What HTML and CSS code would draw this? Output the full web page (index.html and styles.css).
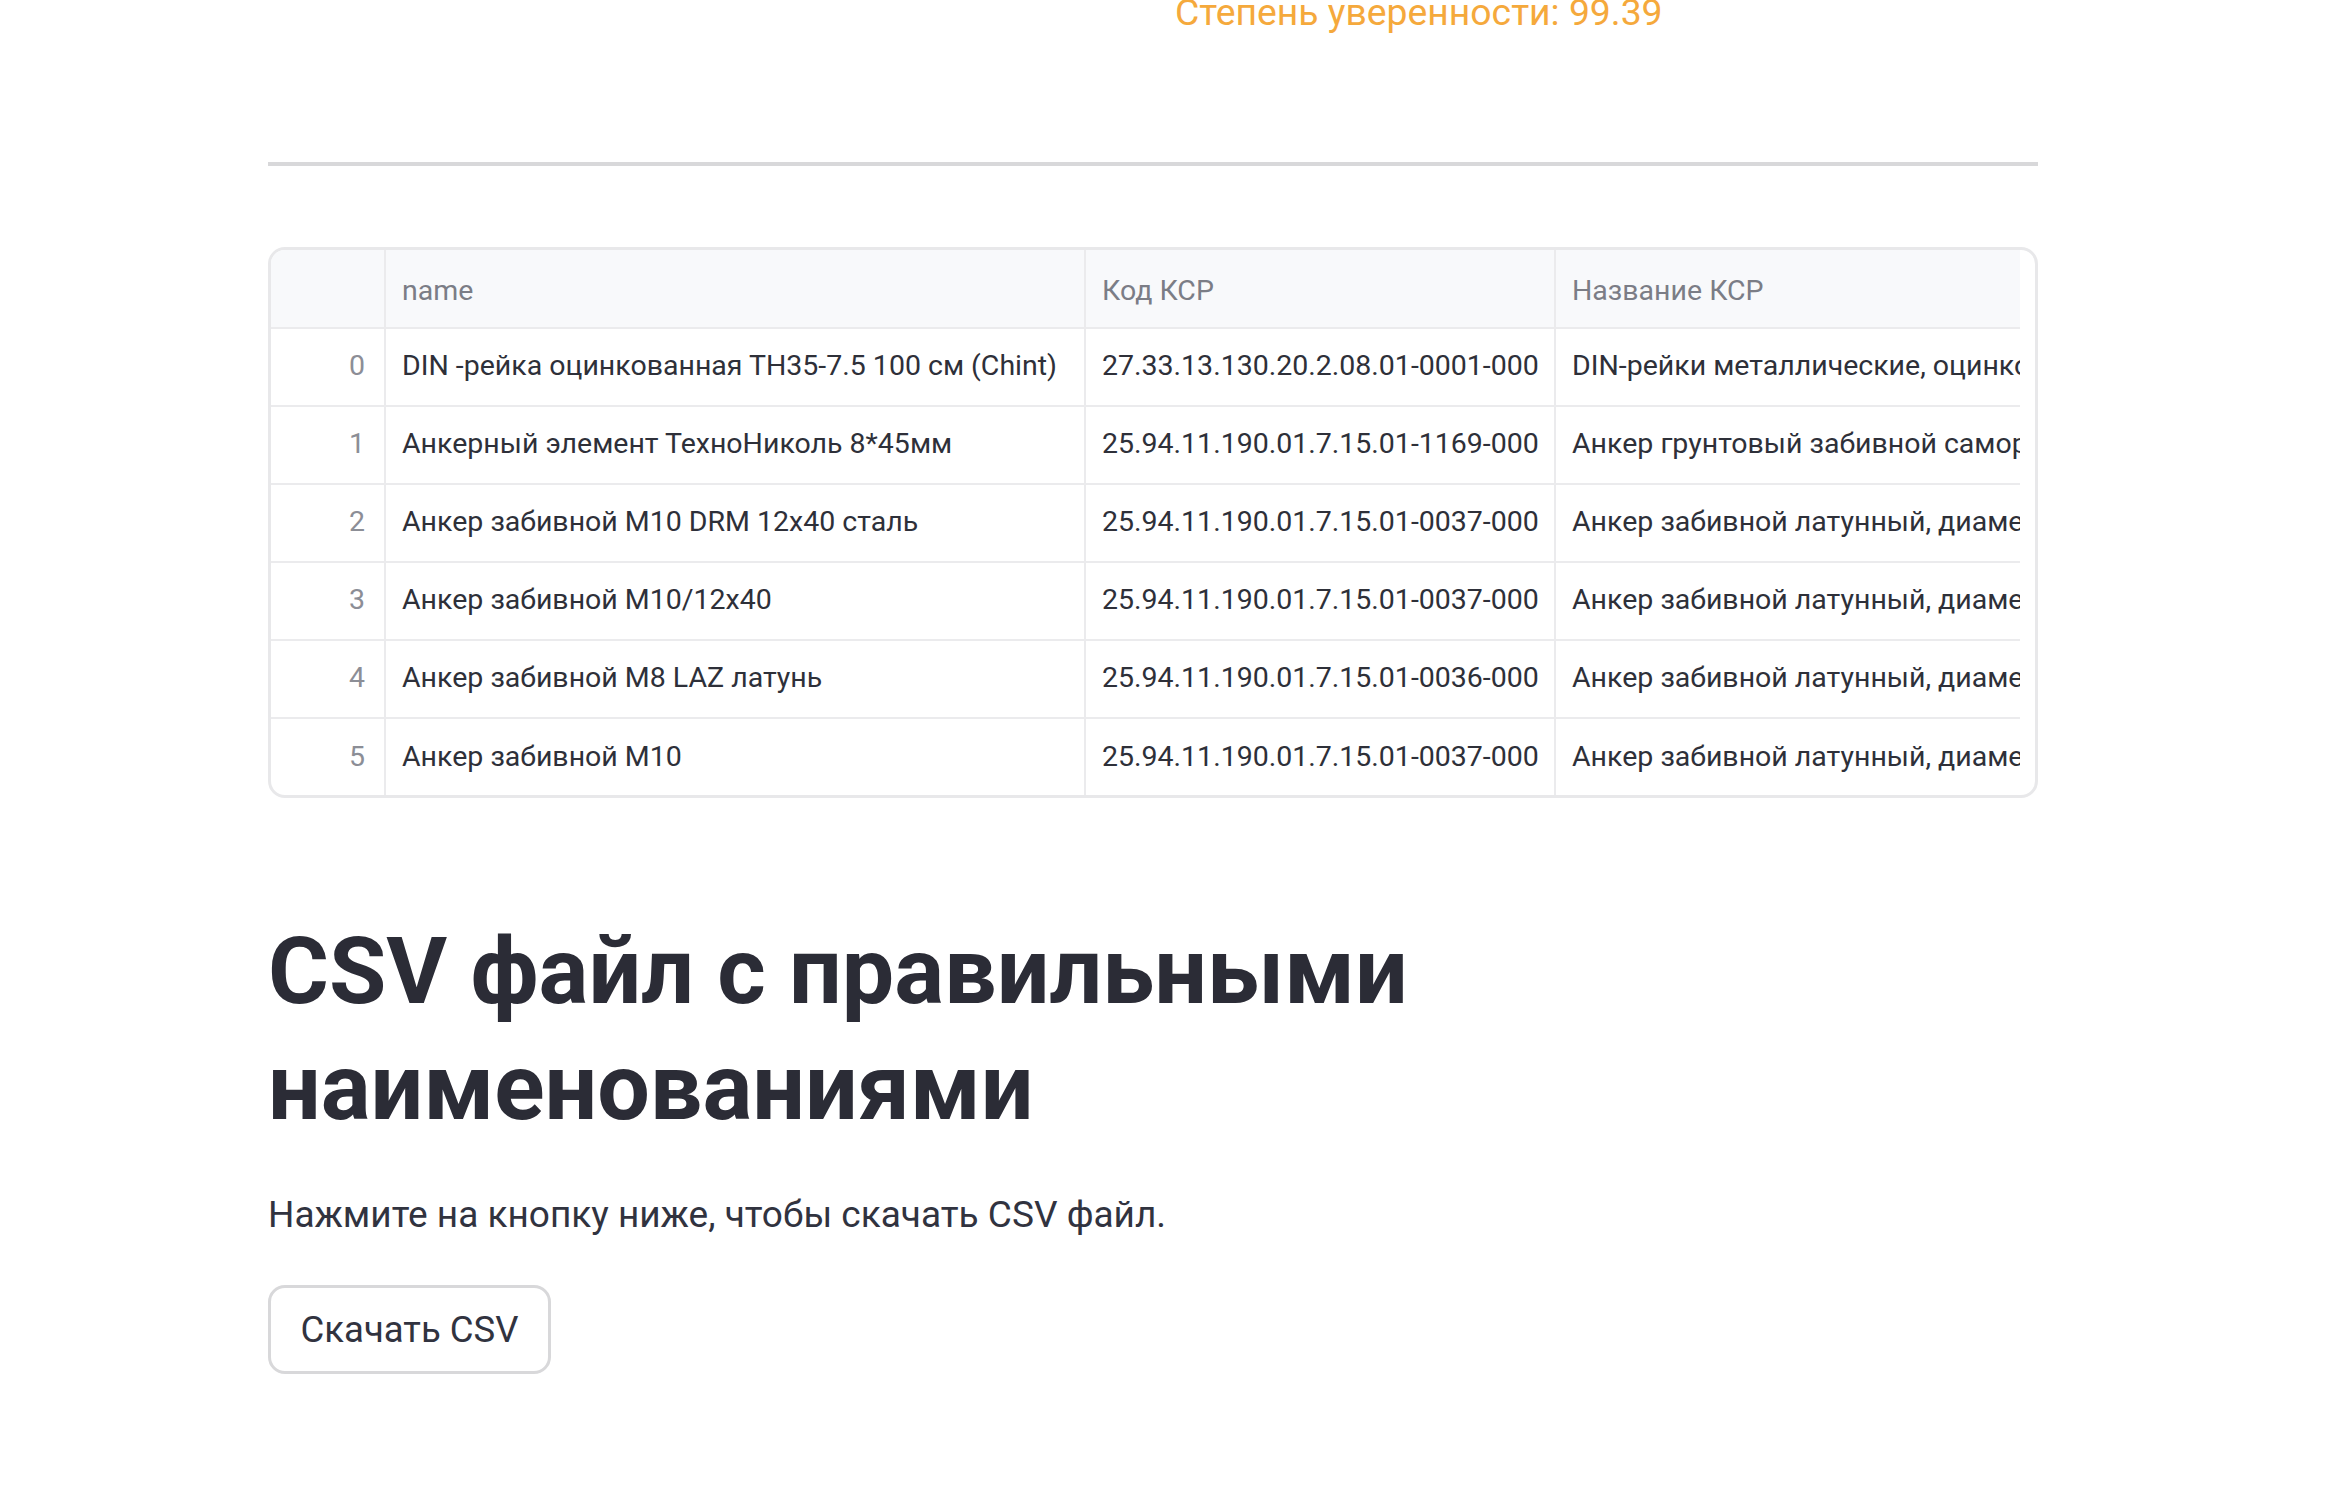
FILE: index.html
```html
<!DOCTYPE html>
<html lang="ru">
<head>
<meta charset="utf-8">
<title>CSV</title>
<link rel="stylesheet" href="styles.css">
</head>
<body>
<main class="page">
  <div class="top-row">
    <div class="col"></div>
    <div class="col"><p class="confidence">Степень уверенности: 99.39</p></div>
  </div>
  <hr class="divider">
  <div class="frame">
    <div class="grid">
      <div class="cell head idx"></div>
      <div class="cell head">name</div>
      <div class="cell head">Код КСР</div>
      <div class="cell head last">Название КСР</div>

      <div class="cell idx">0</div>
      <div class="cell">DIN -рейка оцинкованная ТН35-7.5 100 см (Chint)</div>
      <div class="cell">27.33.13.130.20.2.08.01-0001-000</div>
      <div class="cell last">DIN-рейки металлические, оцинкованные</div>

      <div class="cell idx">1</div>
      <div class="cell">Анкерный элемент ТехноНиколь 8*45мм</div>
      <div class="cell">25.94.11.190.01.7.15.01-1169-000</div>
      <div class="cell last">Анкер грунтовый забивной самораскрывающийся</div>

      <div class="cell idx">2</div>
      <div class="cell">Анкер забивной М10 DRM 12х40 сталь</div>
      <div class="cell">25.94.11.190.01.7.15.01-0037-000</div>
      <div class="cell last">Анкер забивной латунный, диаметр 10 мм</div>

      <div class="cell idx">3</div>
      <div class="cell">Анкер забивной М10/12х40</div>
      <div class="cell">25.94.11.190.01.7.15.01-0037-000</div>
      <div class="cell last">Анкер забивной латунный, диаметр 10 мм</div>

      <div class="cell idx">4</div>
      <div class="cell">Анкер забивной М8 LAZ латунь</div>
      <div class="cell">25.94.11.190.01.7.15.01-0036-000</div>
      <div class="cell last">Анкер забивной латунный, диаметр 8 мм</div>

      <div class="cell idx end">5</div>
      <div class="cell end">Анкер забивной М10</div>
      <div class="cell end">25.94.11.190.01.7.15.01-0037-000</div>
      <div class="cell last end">Анкер забивной латунный, диаметр 10 мм</div>
    </div>
  </div>

  <h1 class="title">CSV файл с правильными наименованиями</h1>
  <p class="hint">Нажмите на кнопку ниже, чтобы скачать CSV файл.</p>
  <button class="btn" type="button">Скачать CSV</button>
</main>
</body>
</html>
```
FILE: styles.css
```css
html, body {
  margin: 0;
  padding: 0;
  background: #ffffff;
}
body {
  font-family: Roboto, "Noto Sans", "Liberation Sans", sans-serif;
  color: #31333f;
  overflow: hidden;
}
.page {
  width: 1770px;
  margin-left: 268px;
  margin-top: -14px;
}
.top-row {
  display: grid;
  grid-template-columns: 1fr 1fr;
  gap: 44px;
}
.confidence {
  margin: 0;
  font-size: 37.3px;
  line-height: 52px;
  color: #f5a93c;
}
.divider {
  margin: 124px 0 0 0;
  height: 4px;
  border: 0;
  background: #d8d8da;
}
.frame {
  margin-top: 81px;
  border: 3px solid #e8e8ea;
  border-radius: 17px;
  overflow: hidden;
  background: #fff;
  height: 551px;
  box-sizing: border-box;
}
.grid {
  display: grid;
  grid-template-columns: 115px 700px 470px 464px;
  grid-auto-rows: 78px;
  grid-template-rows: 79px;
}
.cell {
  box-sizing: border-box;
  border-right: 2px solid #ebebed;
  border-bottom: 2px solid #ebebed;
  padding-left: 16px;
  padding-bottom: 3px;
  display: flex;
  align-items: center;
  white-space: nowrap;
  overflow: hidden;
  font-size: 28.5px;
  color: #2e3039;
}
.cell.last {
  border-right: 0;
  padding-right: 0;
}
.cell.end {
  border-bottom: 0;
}
.head {
  background: #f8f9fb;
  color: #7b7d86;
  padding-top: 4px;
  padding-bottom: 0;
}
.idx {
  justify-content: flex-end;
  padding-left: 0;
  padding-right: 19px;
  color: #8c8e96;
}
.title {
  margin: 116px 0 0 0;
  font-size: 93.2px;
  line-height: 116px;
  font-weight: 700;
  color: #2b2c36;
  width: 1300px;
}
.hint {
  margin: 43px 0 0 0;
  font-size: 37px;
  line-height: 52px;
  color: #31333f;
}
.btn {
  display: block;
  margin-top: 44px;
  width: 283px;
  height: 89px;
  border: 3px solid #d8d8da;
  border-radius: 17px;
  background: #fff;
  font-family: Roboto, "Noto Sans", "Liberation Sans", sans-serif;
  font-size: 36.5px;
  color: #31333f;
  padding: 0;
}
```
